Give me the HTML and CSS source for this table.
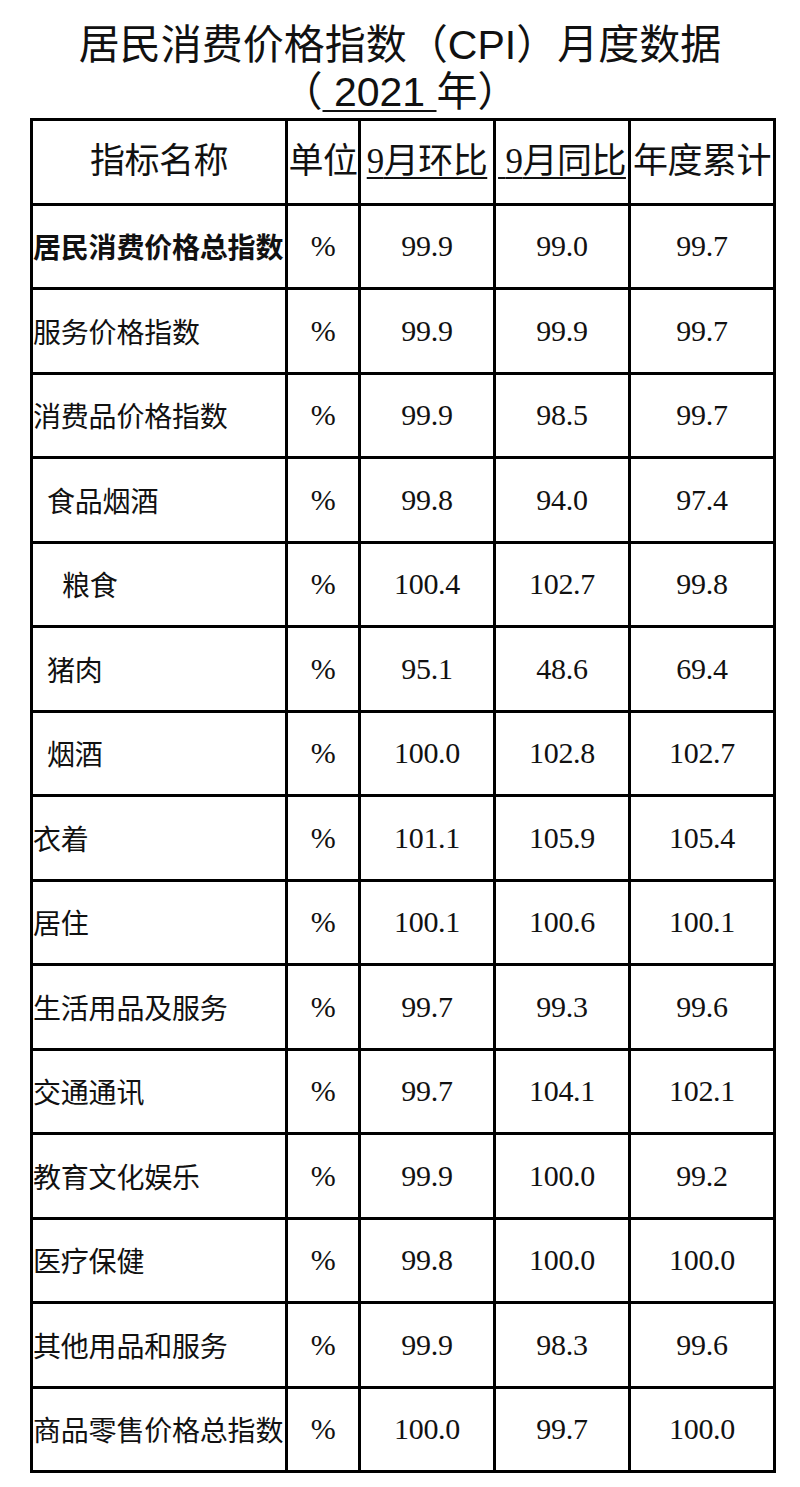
FILE: index.html
```html
<!DOCTYPE html>
<html lang="zh-CN">
<head>
<meta charset="utf-8">
<title>居民消费价格指数（CPI）月度数据</title>
<link rel="stylesheet" href="styles.css">
</head>
<body>
<div class="title">
  <div class="title-line">居民消费价格指数（CPI）月度数据</div>
  <div class="title-line">（<span class="ul">&nbsp;2021&nbsp;</span>年）</div>
</div>
<table class="cpi">
  <colgroup>
    <col class="c-name">
    <col class="c-unit">
    <col class="c-num">
    <col class="c-num">
    <col class="c-last">
  </colgroup>
  <thead>
    <tr class="head">
      <th><span class="hd">指标名称</span></th>
      <th><span class="hd">单位</span></th>
      <th><span class="hd ul"><span class="serif">9</span>月环比</span></th>
      <th><span class="hd ul">&nbsp;<span class="serif">9</span>月同比</span></th>
      <th><span class="hd">年度累计</span></th>
    </tr>
  </thead>
  <tbody>
    <tr><td class="name bold">居民消费价格总指数</td><td class="num">%</td><td class="num">99.9</td><td class="num">99.0</td><td class="num">99.7</td></tr>
    <tr><td class="name">服务价格指数</td><td class="num">%</td><td class="num">99.9</td><td class="num">99.9</td><td class="num">99.7</td></tr>
    <tr><td class="name">消费品价格指数</td><td class="num">%</td><td class="num">99.9</td><td class="num">98.5</td><td class="num">99.7</td></tr>
    <tr><td class="name ind1">食品烟酒</td><td class="num">%</td><td class="num">99.8</td><td class="num">94.0</td><td class="num">97.4</td></tr>
    <tr><td class="name ind2">粮食</td><td class="num">%</td><td class="num">100.4</td><td class="num">102.7</td><td class="num">99.8</td></tr>
    <tr><td class="name ind1">猪肉</td><td class="num">%</td><td class="num">95.1</td><td class="num">48.6</td><td class="num">69.4</td></tr>
    <tr><td class="name ind1">烟酒</td><td class="num">%</td><td class="num">100.0</td><td class="num">102.8</td><td class="num">102.7</td></tr>
    <tr><td class="name">衣着</td><td class="num">%</td><td class="num">101.1</td><td class="num">105.9</td><td class="num">105.4</td></tr>
    <tr><td class="name">居住</td><td class="num">%</td><td class="num">100.1</td><td class="num">100.6</td><td class="num">100.1</td></tr>
    <tr><td class="name">生活用品及服务</td><td class="num">%</td><td class="num">99.7</td><td class="num">99.3</td><td class="num">99.6</td></tr>
    <tr><td class="name">交通通讯</td><td class="num">%</td><td class="num">99.7</td><td class="num">104.1</td><td class="num">102.1</td></tr>
    <tr><td class="name">教育文化娱乐</td><td class="num">%</td><td class="num">99.9</td><td class="num">100.0</td><td class="num">99.2</td></tr>
    <tr><td class="name">医疗保健</td><td class="num">%</td><td class="num">99.8</td><td class="num">100.0</td><td class="num">100.0</td></tr>
    <tr><td class="name">其他用品和服务</td><td class="num">%</td><td class="num">99.9</td><td class="num">98.3</td><td class="num">99.6</td></tr>
    <tr><td class="name">商品零售价格总指数</td><td class="num">%</td><td class="num">100.0</td><td class="num">99.7</td><td class="num">100.0</td></tr>
  </tbody>
</table>
</body>
</html>
```
FILE: styles.css
```css
html, body {
  margin: 0;
  padding: 0;
  background: #ffffff;
  color: #111111;
}

body {
  font-family: "Liberation Sans", "Noto Sans CJK SC", sans-serif;
}

.title {
  padding-top: 22px;
  text-align: center;
  font-family: "Liberation Sans", "Noto Sans CJK SC", sans-serif;
  font-size: 41px;
  font-weight: 400;
}

.title-line {
  line-height: 47px;
  height: 47px;
}

.ul {
  text-decoration: underline;
  text-decoration-thickness: 2px;
  text-underline-offset: 4px;
}

.cpi {
  margin-top: 2px;
  margin-left: 30px;
  width: 743px;
  table-layout: fixed;
  border-collapse: collapse;
  border: 3px solid #000;
}

.c-name { width: 255px; }
.c-unit { width: 73px; }
.c-num { width: 135px; }
.c-last { width: 145px; }

.cpi th,
.cpi td {
  border: 3px solid #000;
  padding: 0;
  white-space: nowrap;
  overflow: hidden;
}

.cpi tr {
  height: 84.5px;
}

.cpi th {
  font-family: "Noto Sans CJK SC", sans-serif;
  font-weight: 400;
  font-size: 35px;
  text-align: center;
  vertical-align: middle;
  padding-bottom: 8px;
  letter-spacing: -0.5px;
}

.hd {
  display: inline-block;
  line-height: 40px;
}

.cpi th .serif,
.serif {
  font-family: "Liberation Serif", "Times New Roman", Tinos, "DejaVu Serif", serif;
}

.name {
  font-family: "Noto Sans CJK SC", sans-serif;
  font-size: 28px;
  text-align: left;
  padding-left: 1px;
  letter-spacing: -0.2px;
}

.bold {
  font-weight: 700;
}

.name.ind1 {
  padding-left: 14px;
}

.name.ind2 {
  padding-left: 29px;
}

.cpi td.num {
  font-family: "Liberation Serif", "Times New Roman", Tinos, "DejaVu Serif", serif;
  font-size: 30px;
  text-align: center;
  vertical-align: middle;
  letter-spacing: -0.3px;
}
```
